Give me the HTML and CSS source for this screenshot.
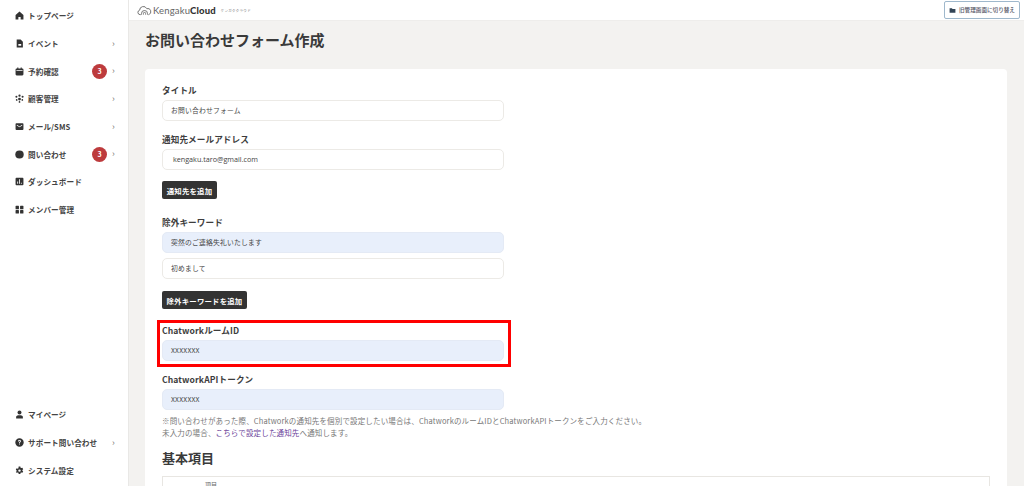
FILE: index.html
```html
<!DOCTYPE html>
<html lang="ja">
<head>
<meta charset="utf-8">
<title>お問い合わせフォーム作成</title>
<link rel="stylesheet" href="styles.css">
</head>
<body>
<div class="app">
  <aside class="sidebar">
    <nav class="nav">
      <a class="nav-item"><svg class="ico" viewBox="0 0 16 16"><path d="M8 1 1 7v8h5v-4.500h4V15h5V7z"/></svg><span class="nav-text">トップページ</span></a>
      <a class="nav-item"><svg class="ico" viewBox="0 0 16 16"><path fill-rule="evenodd" d="M3 1h7l4 4v10H3zM6 9v3h5V9z"/></svg><span class="nav-text">イベント</span><span class="chev">›</span></a>
      <a class="nav-item"><svg class="ico" viewBox="0 0 16 16"><path fill-rule="evenodd" d="M4 1h2v1.500h4V1h2v1.500h1A2 2 0 0 1 15 4.500V13a2 2 0 0 1-2 2H3a2 2 0 0 1-2-2V4.500a2 2 0 0 1 2-2h1zM2.500 5.500v1h11v-1z"/></svg><span class="nav-text">予約確認</span><span class="badge">3</span><span class="chev">›</span></a>
      <a class="nav-item"><svg class="ico" viewBox="0 0 16 16"><circle cx="8" cy="3" r="2"/><circle cx="2.500" cy="5" r="1.800"/><circle cx="13.500" cy="5" r="1.800"/><circle cx="8" cy="9" r="2.500"/><circle cx="3" cy="10.500" r="1.500"/><circle cx="13" cy="10.500" r="1.500"/><circle cx="8" cy="14" r="1.500"/></svg><span class="nav-text">顧客管理</span><span class="chev">›</span></a>
      <a class="nav-item"><svg class="ico" viewBox="0 0 16 16"><path fill-rule="evenodd" d="M2.500 2h11A1.500 1.500 0 0 1 15 3.500v9a1.500 1.500 0 0 1-1.500 1.500h-11A1.500 1.500 0 0 1 1 12.500v-9A1.500 1.500 0 0 1 2.500 2zM3.500 5 3 6l5 3.500L13 6l-.5-1L8 7.800z"/></svg><span class="nav-text">メール/SMS</span><span class="chev">›</span></a>
      <a class="nav-item"><svg class="ico" viewBox="0 0 16 16"><ellipse cx="8" cy="8" rx="7.500" ry="7"/></svg><span class="nav-text">問い合わせ</span><span class="badge">3</span><span class="chev">›</span></a>
      <a class="nav-item"><svg class="ico" viewBox="0 0 16 16"><path fill-rule="evenodd" d="M2.500 1.500h11a1.500 1.500 0 0 1 1.500 1.500v10a1.500 1.500 0 0 1-1.500 1.500h-11A1.500 1.500 0 0 1 1 13V3a1.500 1.500 0 0 1 1.500-1.500zM4 8v4h1.500V8zM7.300 4v8h1.500V4zM10.500 10v2H12v-2z"/></svg><span class="nav-text">ダッシュボード</span></a>
      <a class="nav-item"><svg class="ico" viewBox="0 0 16 16"><rect x="1" y="1.500" width="6" height="6" rx="1"/><rect x="9" y="1.500" width="6" height="6" rx="1"/><rect x="1" y="9" width="6" height="6" rx="1"/><rect x="9" y="9" width="6" height="6" rx="1"/></svg><span class="nav-text">メンバー管理</span></a>
    </nav>
    <nav class="nav">
      <a class="nav-item"><svg class="ico" viewBox="0 0 16 16"><circle cx="8" cy="4.500" r="3.500"/><path d="M2 15v-2.500C2 10.500 4 9.500 8 9.500s6 1 6 3V15z"/></svg><span class="nav-text">マイページ</span></a>
      <a class="nav-item"><svg class="ico" viewBox="0 0 16 16"><path fill-rule="evenodd" d="M8 .5a7.500 7.500 0 1 1 0 15 7.500 7.500 0 0 1 0-15zM5.500 6h1.600c0-.7.3-1.100.9-1.100.5 0 .9.300.9.800 0 1-1.700 1.200-1.700 3h1.500c0-1.300 1.800-1.500 1.800-3.100 0-1.300-1-2.100-2.500-2.100S5.500 4.400 5.500 6zM7.200 9.800v1.700h1.600V9.800z"/></svg><span class="nav-text">サポート問い合わせ</span><span class="chev">›</span></a>
      <a class="nav-item"><svg class="ico" viewBox="0 0 16 16"><path fill-rule="evenodd" d="m6.500 1h3l.4 2 1.300.7 1.900-.7 1.500 2.600-1.500 1.300v1.400l1.500 1.300-1.500 2.600-1.900-.7-1.300.7-.4 2h-3l-.4-2-1.300-.7-1.900.7L1.400 10.600l1.500-1.300V7.900L1.400 6.600l1.500-2.600 1.900.7 1.300-.7zM8 6a2.200 2.200 0 1 0 0 4.400A2.200 2.200 0 0 0 8 6z"/></svg><span class="nav-text">システム設定</span></a>
    </nav>
  </aside>
  <div class="content">
    <header class="topbar">
      <div class="brand">
        <svg class="logo" viewBox="0 0 20 14"><path d="M5 12.500H4A3 3 0 0 1 3.500 6.600 5 5 0 0 1 13 4.500 3.800 3.800 0 0 1 15.500 12.500H15"/><path d="M6 12.500V11a4 4 0 0 1 8 0v1.500M8.500 12.500V11a1.500 1.500 0 0 1 3 0v1.500"/></svg>
        <span class="brand-name">Kengaku<b>Cloud</b></span>
        <span class="brand-sub">ケンガククラウド</span>
      </div>
      <a class="switch"><svg class="switch-ico" viewBox="0 0 12 12"><path d="M1 2h4l1 1.500h5V10H1z"/></svg>旧管理画面に切り替え</a>
    </header>
    <main class="main">
      <h1 class="page-title">お問い合わせフォーム作成</h1>
      <section class="card">
        <div class="field field-first">
          <label class="label">タイトル</label>
          <div class="input">お問い合わせフォーム</div>
        </div>
        <div class="field">
          <label class="label">通知先メールアドレス</label>
          <div class="input input-mail">kengaku.taro@gmail.com</div>
        </div>
        <button class="btn btn-notify">通知先を追加</button>
        <div class="field field-keyword">
          <label class="label">除外キーワード</label>
          <div class="input filled">突然のご連絡失礼いたします</div>
          <div class="input input-second">初めまして</div>
        </div>
        <button class="btn btn-keyword">除外キーワードを追加</button>
        <div class="field field-room">
          <label class="label">ChatworkルームID</label>
          <div class="input filled">XXXXXXX</div>
          <div class="highlight"></div>
        </div>
        <div class="field">
          <label class="label">ChatworkAPIトークン</label>
          <div class="input filled">XXXXXXX</div>
        </div>
        <p class="note">※問い合わせがあった際、Chatworkの通知先を個別で設定したい場合は、ChatworkのルームIDとChatworkAPIトークンをご入力ください。<br>未入力の場合、<a class="note-link">こちらで設定した通知先</a>へ通知します。</p>
        <h2 class="section-title">基本項目</h2>
        <div class="table-box"><span class="table-head">項目</span></div>
      </section>
    </main>
  </div>
</div>
</body>
</html>
```
FILE: styles.css
```css
* { box-sizing: border-box; }
html, body { margin: 0; height: 100%; overflow: hidden; }
body {
  font-family: "Noto Sans CJK JP", "Noto Sans", sans-serif;
  color: #333;
  background: #f3f2f0;
}
.app { display: flex; height: 486px; }

.sidebar {
  width: 129px;
  flex: none;
  background: #fff;
  border-right: 1px solid #e9e8e6;
  display: flex;
  flex-direction: column;
  justify-content: space-between;
  padding: 2px 0 2px;
}
.nav { display: flex; flex-direction: column; }
.nav-item {
  height: 27.7px;
  display: flex;
  align-items: center;
  padding-left: 15px;
  position: relative;
  color: #3a3a3a;
}
.ico { width: 9px; height: 9px; fill: #333; flex: none; margin-right: 4px; }
.nav-text { font-size: 7.6px; font-weight: 700; letter-spacing: .1px; white-space: nowrap; color: #444; }
.chev { position: absolute; left: 112px; font-size: 9px; line-height: 1; color: #777; top: 9px; }
.badge {
  position: absolute;
  left: 92px;
  top: 6.500px;
  width: 15px;
  height: 15px;
  border-radius: 50%;
  background: #bd3b3d;
  color: #fff;
  font-size: 7px;
  font-weight: 700;
  line-height: 15px;
  text-align: center;
}

.content { flex: 1; min-width: 0; display: flex; flex-direction: column; }
.topbar {
  height: 21px;
  background: #fff;
  border-bottom: 1px solid #eeedeb;
  display: flex;
  align-items: center;
  justify-content: space-between;
  padding: 0 4px 0 8px;
  flex: none;
}
.brand { display: flex; align-items: center; }
.logo { width: 15px; height: 11px; fill: none; stroke: #666; stroke-width: 1.200; margin-right: 1px; }
.brand-name { font-family: "Lato", sans-serif; font-size: 9.500px; color: #666; letter-spacing: .15px; }
.brand-name b { color: #333; font-weight: 900; }
.brand-sub { font-size: 3.500px; color: #777; margin-left: 5px; letter-spacing: .3px; }
.switch {
  height: 18px;
  width: 76px;
  border: 1px solid #9fb8cc;
  border-radius: 2px;
  background: #fff;
  font-size: 5.600px;
  font-weight: 500;
  color: #556;
  display: flex;
  align-items: center;
  justify-content: center;
  white-space: nowrap;
}
.switch-ico { width: 7px; height: 7px; fill: #345; margin-right: 3px; }

.main { flex: 1; min-height: 0; padding: 0 17px 0 16px; overflow: hidden; }
.page-title { margin: 7px 0 0; font-size: 15px; line-height: 24px; font-weight: 700; color: #3a3a3a; }
.card {
  margin-top: 17px;
  background: #fff;
  border-radius: 4px;
  padding: 15px 17px 0;
  height: 500px;
}
.field { position: relative; margin-top: 12px; }
.field-first { margin-top: 0; }
.field-keyword { margin-top: 17px; }
.field-room { margin-top: 15px; }
.label {
  display: block;
  font-size: 8.600px;
  font-weight: 700;
  line-height: 12px;
  letter-spacing: .1px;
  color: #3d3d3d;
  margin-bottom: 4px;
}
.input {
  width: 342px;
  height: 21px;
  border: 1px solid #eceae6;
  border-radius: 5px;
  background: #fff;
  padding: 0 8px;
  font-size: 6.800px;
  line-height: 19px;
  letter-spacing: .2px;
  color: #444;
}
.input-mail { padding-left: 10px; font-size: 7.200px; letter-spacing: 0; font-family: "Open Sans", sans-serif; }
.input-second { margin-top: 5px; }
.filled { background: #e8effb; border-color: #e4eaf5; }
.btn {
  display: block;
  border: 0;
  border-radius: 2px;
  background: #333;
  color: #fff;
  font-family: inherit;
  font-size: 7.400px;
  font-weight: 700;
  letter-spacing: .2px;
  height: 18px;
  padding: 0 4px;
  white-space: nowrap;
}
.btn-notify { margin-top: 11px; width: 55px; }
.btn-keyword { margin-top: 12px; width: 85px; }
.highlight {
  position: absolute;
  left: -5px;
  top: -4px;
  width: 354px;
  height: 47px;
  border: 3px solid #f00;
}
.note {
  margin: 5px 0 0;
  font-size: 7.500px;
  line-height: 12px;
  letter-spacing: .15px;
  color: #777;
  white-space: nowrap;
}
.note-link { color: #6b3f9a; }
.section-title { margin: 9px 0 0; font-size: 13px; line-height: 20px; font-weight: 700; color: #3a3a3a; }
.table-box {
  margin-top: 8px;
  height: 100px;
  border: 1px solid #e8e6e2;
  padding: 3px 0 0 42px;
}
.table-head { font-size: 6px; color: #666; line-height: 10px; display: block; }
```
